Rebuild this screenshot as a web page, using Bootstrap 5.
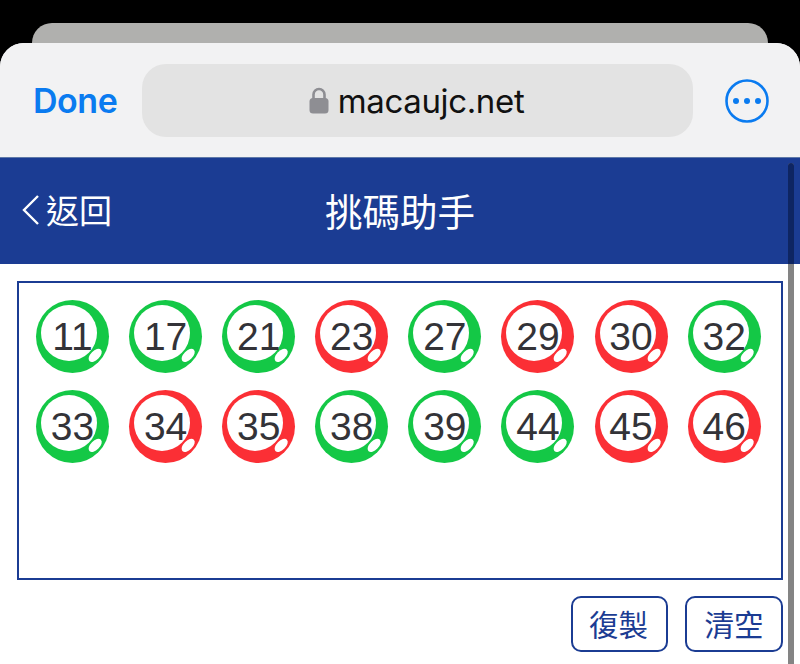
<!DOCTYPE html>
<html lang="zh-Hant">
<head>
<meta charset="utf-8">
<title>挑碼助手</title>
<link href="https://cdn.jsdelivr.net/npm/bootstrap@5.3.0/dist/css/bootstrap.min.css" rel="stylesheet">
<style>
html,body{height:664px;overflow:hidden;background:#000;}
body{font-family:"Liberation Sans","Noto Sans CJK TC",sans-serif;padding-top:23px;}
.tab-back{height:20px;margin:0 32px;background:#b0b0ae;border-radius:20px 20px 0 0;}
.sheet{height:621px;background:#fff;border-radius:24px 24px 0 0;overflow:hidden;position:relative;}
.safari-bar{height:114px;background:#f2f2f3;padding:21px 26px 20px 33px;gap:26px;}
.done{font:600 34px Inter,sans-serif;color:#0a7bf0;letter-spacing:-.45px;text-decoration:none;width:83px;}
.urlbox{width:551px;height:73px;background:#e3e3e3;border-radius:24px;gap:9px;font:400 33px Inter,sans-serif;color:#111;letter-spacing:-.35px;padding-right:2px;}
.more-btn{margin-left:6px;display:block;}
.head-bar{height:107px;background:#1b3c93;color:#fff;font-family:"Noto Sans CJK TC",sans-serif;padding-bottom:3px;border-top:1px solid #5f79a8;}
.back-link{color:#fff;text-decoration:none;font-size:33px;line-height:1;padding-left:21px;gap:6px;width:325px;}
.head-title{font-size:37.5px;line-height:1;}
.content-area{padding:17px 17px 0;}
.pick-box{height:299px;border:2px solid #1b3c93;padding:17px 0 0 17px;grid-template-columns:repeat(8,73px);column-gap:20.1px;row-gap:17px;align-content:start;}
.ball{width:73px;height:73px;border-radius:50%;position:relative;font:400 39px "Liberation Sans",sans-serif;line-height:73px;text-align:center;color:#333338;}
.ball::before{content:"";position:absolute;left:5px;top:5px;width:56px;height:56px;background:#fff;border-radius:50%;}
.ball::after{content:"";position:absolute;left:51px;top:51px;width:16px;height:8.5px;background:#fff;border-radius:50%;transform:rotate(-45deg);}
.ball span{position:relative;z-index:1;}
.ball-g{background:#14c846;}
.ball-r{background:#fb2f35;}
.action-row{margin-top:16px;gap:17px;}
.act-btn{width:97px;height:56px;border:2px solid #1b3c93;border-radius:10px;background:#fff;color:#1b3c93;font:400 29.5px "Noto Sans CJK TC",sans-serif;padding:0 2px 3px 0;}
.act-btn:last-child{width:98px;padding:0 0 3px;}
.scroll-thumb{position:absolute;left:788px;top:120px;width:6px;height:501px;background:#848484;border-radius:3px 3px 0 0;}
.scroll-thumb-top{position:absolute;left:0;top:0;width:6px;height:101px;background:#0e2562;border-radius:3px 3px 0 0;}
</style>
</head>
<body>
<div class="tab-back"></div>
<div class="sheet">
  <div class="safari-bar d-flex align-items-center">
    <a class="done" href="#">Done</a>
    <div class="urlbox d-flex align-items-center justify-content-center">
      <svg width="20" height="27" viewBox="0 0 20 27" aria-hidden="true"><path d="M4.5 12V7.5a5.5 5.5 0 0 1 11 0V12" fill="none" stroke="#8e8e93" stroke-width="2.6"/><rect x="0.5" y="11" width="19" height="15.5" rx="3.5" fill="#8e8e93"/></svg>
      <span>macaujc.net</span>
    </div>
    <svg class="more-btn" width="44" height="44" viewBox="0 0 44 44" aria-hidden="true"><circle cx="22" cy="22" r="20.5" fill="none" stroke="#0a7bf0" stroke-width="2.6"/><circle cx="11" cy="22" r="3" fill="#0a7bf0"/><circle cx="22" cy="22" r="3" fill="#0a7bf0"/><circle cx="33" cy="22" r="3" fill="#0a7bf0"/></svg>
  </div>
  <div class="head-bar d-flex align-items-center">
    <a class="back-link d-flex align-items-center" href="#">
      <svg width="19" height="32" viewBox="0 0 19 32" aria-hidden="true"><path d="M17 2 3 16l14 14" fill="none" stroke="#fff" stroke-width="2.4"/></svg>
      <span>返回</span>
    </a>
    <div class="head-title">挑碼助手</div>
  </div>
  <div class="content-area">
    <div class="pick-box d-grid">
      <div class="ball ball-g"><span>11</span></div>
      <div class="ball ball-g"><span>17</span></div>
      <div class="ball ball-g"><span>21</span></div>
      <div class="ball ball-r"><span>23</span></div>
      <div class="ball ball-g"><span>27</span></div>
      <div class="ball ball-r"><span>29</span></div>
      <div class="ball ball-r"><span>30</span></div>
      <div class="ball ball-g"><span>32</span></div>
      <div class="ball ball-g"><span>33</span></div>
      <div class="ball ball-r"><span>34</span></div>
      <div class="ball ball-r"><span>35</span></div>
      <div class="ball ball-g"><span>38</span></div>
      <div class="ball ball-g"><span>39</span></div>
      <div class="ball ball-g"><span>44</span></div>
      <div class="ball ball-r"><span>45</span></div>
      <div class="ball ball-r"><span>46</span></div>
    </div>
    <div class="action-row d-flex justify-content-end">
      <button type="button" class="btn act-btn">復製</button>
      <button type="button" class="btn act-btn">清空</button>
    </div>
  </div>
  <div class="scroll-thumb"><div class="scroll-thumb-top"></div></div>
</div>
<script src="https://cdn.jsdelivr.net/npm/bootstrap@5.3.0/dist/js/bootstrap.bundle.min.js"></script>
</body>
</html>
